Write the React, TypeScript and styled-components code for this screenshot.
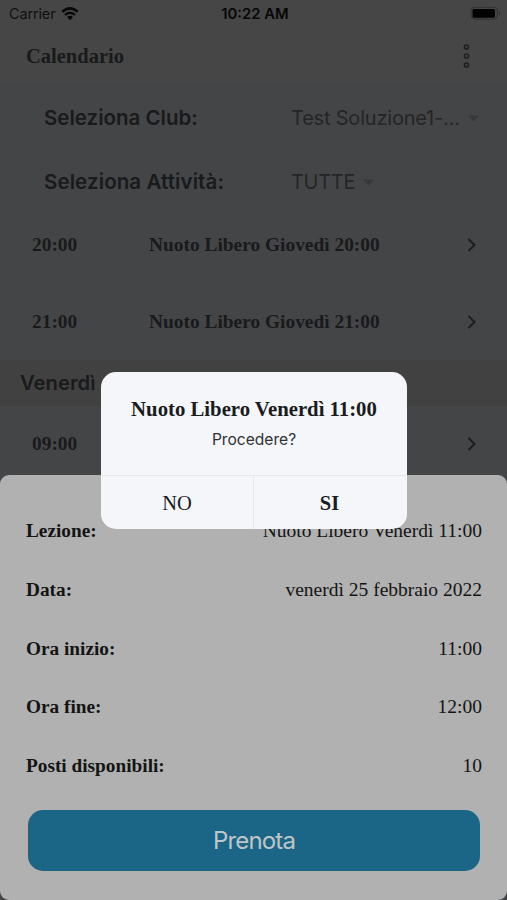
import React from "react";
import styled, { createGlobalStyle } from "styled-components";

const GlobalStyle = createGlobalStyle`
  * { box-sizing: border-box; }
  body { margin: 0; background: #464646; }
`;

const serif = '"Liberation Serif", "Times New Roman", serif';
const sans = 'Inter, "Liberation Sans", sans-serif';

const Phone = styled.main`
  position: relative;
  width: 507px;
  height: 900px;
  overflow: hidden;
  background: #444547;
  color: #191a1b;
  font-family: ${serif};
  white-space: nowrap;
`;

const StatusBar = styled.div`
  display: grid;
  grid-template-columns: 1fr auto 1fr;
  align-items: center;
  height: 28px;
  padding: 0 6px 0 9px;
  background: #464646;
  color: #070707;
  font: 400 14.5px/28px ${sans};
`;

const Carrier = styled.div`
  display: flex;
  align-items: center;
  gap: 6px;
  color: #111;
  letter-spacing: -0.15px;
`;

const Clock = styled.div`
  font-weight: 600;
  font-size: 14.8px;
`;

const Battery = styled.svg`
  justify-self: end;
`;

const Header = styled.header`
  display: flex;
  align-items: center;
  justify-content: space-between;
  height: 56px;
  padding: 0 36px 0 26px;
  background: #464646;
`;

const Title = styled.h1`
  margin: 0;
  font: 700 20.5px/24px ${serif};
`;

const Filters = styled.section`
  display: flex;
  flex-direction: column;
  height: 123px;
  padding-top: 2px;
`;

const FilterRow = styled.div`
  display: flex;
  flex: none;
  align-items: center;
  height: 64px;
  padding-left: 44px;
  font: 400 20px/28px ${sans};
`;

const FilterLabel = styled.span<{ $spacing?: number }>`
  width: 247px;
  font-weight: 600;
  font-size: 20.5px;
  letter-spacing: ${(p) => p.$spacing ?? 0}px;
`;

const FilterValue = styled.span<{ $spacing: number }>`
  display: flex;
  align-items: center;
  gap: 8px;
  color: #242526;
  letter-spacing: ${(p) => p.$spacing}px;
`;

const LessonRow = styled.div`
  display: grid;
  grid-template-columns: 117px 1fr auto;
  align-items: center;
  height: 76.4px;
  padding: 0 30px 0 32px;
  font: 700 19.4px/24px ${serif};
`;

const DayHeader = styled.h2`
  margin: 0;
  height: 46px;
  padding-left: 20px;
  background: #424141;
  font: 600 20.3px/46px ${sans};
  word-spacing: 2px;
`;

const Sheet = styled.section`
  position: absolute;
  left: 0;
  right: 0;
  top: 475px;
  height: 425px;
  padding: 27.2px 25px 0 26px;
  border-radius: 9px;
  background: #b1b1b1;
  color: #141414;
`;

const DetailRow = styled.div`
  display: flex;
  align-items: center;
  justify-content: space-between;
  height: 58.6px;
  font-size: 19.5px;
`;

const DetailLabel = styled.b`
  font-size: 19.3px;
`;

const Book = styled.button`
  display: block;
  width: 452px;
  height: 61px;
  margin: 14.8px 0 0 2px;
  border: 0;
  border-radius: 15px;
  background: #1b6687;
  color: #c0c5c7;
  font: 400 24px/61px ${sans};
  letter-spacing: -0.85px;
  padding: 0;
`;

const Dialog = styled.div`
  position: absolute;
  left: 101px;
  top: 372px;
  width: 306px;
  height: 157px;
  border-radius: 15px;
  background: #f4f6fa;
  color: #1b1c1e;
  text-align: center;
  overflow: hidden;
`;

const DialogBody = styled.div`
  height: 103px;
  padding-top: 25px;
`;

const DialogTitle = styled.div`
  font: 700 20.75px/25px ${serif};
`;

const DialogText = styled.div`
  margin-top: 7px;
  color: #303134;
  font: 400 15.6px/22px ${sans};
`;

const Actions = styled.div`
  display: grid;
  grid-template-columns: 152px 1fr;
  height: 54px;
  border-top: 1px solid #e7e9ed;
`;

const Action = styled.button<{ $primary?: boolean }>`
  border: 0;
  border-left: ${(p) => (p.$primary ? "1px solid #e7e9ed" : "0")};
  background: transparent;
  color: #1b1c1e;
  font: ${(p) => (p.$primary ? 700 : 400)} 20.5px/24px ${serif};
  padding: ${(p) => (p.$primary ? "1px 2px 0 0" : "1px 0 0")};
`;

const Wifi = () => (
  <svg width="18" height="14" viewBox="0 0 19 15" fill="none" stroke="#080808">
    <path d="M1.2 5.2Q9.5-2.1 17.8 5.2" strokeWidth="2.8" />
    <path d="M4.1 8.5Q9.5 3.8 14.9 8.5" strokeWidth="2.5" />
    <path d="M9.5 14.2 6.4 10.8Q9.5 8.2 12.6 10.8Z" fill="#080808" stroke="none" />
  </svg>
);

const Dots = () => (
  <svg width="10" height="26" viewBox="0 0 10 26" fill="none" stroke="#202020" strokeWidth="1.7">
    <circle cx="5.5" cy="4" r="2" />
    <circle cx="5.5" cy="13" r="2" />
    <circle cx="5.5" cy="22" r="2" />
  </svg>
);

const Caret = () => (
  <svg width="11" height="7" viewBox="0 0 11 7">
    <path d="M0 .5h11L5.5 6.5z" fill="#37383a" />
  </svg>
);

const Chevron = () => (
  <svg width="10" height="16" viewBox="0 0 10 16" fill="none" stroke="#1c1d1e" strokeWidth="2">
    <path d="m1.5 2 6 6-6 6" />
  </svg>
);

const Lesson = ({ time, name }: { time: string; name: string }) => (
  <LessonRow>
    <span>{time}</span>
    <span>{name}</span>
    <Chevron />
  </LessonRow>
);

const details = [
  ["Lezione:", "Nuoto Libero Venerdì 11:00"],
  ["Data:", "venerdì 25 febbraio 2022"],
  ["Ora inizio:", "11:00"],
  ["Ora fine:", "12:00"],
  ["Posti disponibili:", "10"],
];

export default function App() {
  return (
    <Phone>
      <GlobalStyle />
      <StatusBar>
        <Carrier>
          Carrier <Wifi />
        </Carrier>
        <Clock>10:22 AM</Clock>
        <Battery width="31" height="14" viewBox="0 0 31 14">
          <rect x="1" y=".2" width="26.5" height="12" rx="4" fill="none" stroke="#303030" />
          <rect x="2.5" y="1.9" width="22.5" height="8.8" rx="1.5" fill="#020202" />
          <path d="M29 4q2 2.2 0 4.4z" fill="#303030" />
        </Battery>
      </StatusBar>
      <Header>
        <Title>Calendario</Title>
        <Dots />
      </Header>
      <Filters>
        <FilterRow>
          <FilterLabel>Seleziona Club:</FilterLabel>
          <FilterValue $spacing={-0.2}>
            Test Soluzione1-... <Caret />
          </FilterValue>
        </FilterRow>
        <FilterRow>
          <FilterLabel $spacing={0.1}>Seleziona Attività:</FilterLabel>
          <FilterValue $spacing={-0.3}>
            TUTTE <Caret />
          </FilterValue>
        </FilterRow>
      </Filters>
      <Lesson time="20:00" name="Nuoto Libero Giovedì 20:00" />
      <Lesson time="21:00" name="Nuoto Libero Giovedì 21:00" />
      <DayHeader>Venerdì 25</DayHeader>
      <Lesson time="09:00" name="" />
      <Sheet>
        {details.map(([label, value]) => (
          <DetailRow key={label}>
            <DetailLabel>{label}</DetailLabel>
            <span>{value}</span>
          </DetailRow>
        ))}
        <Book>Prenota</Book>
      </Sheet>
      <Dialog role="dialog">
        <DialogBody>
          <DialogTitle>Nuoto Libero Venerdì 11:00</DialogTitle>
          <DialogText>Procedere?</DialogText>
        </DialogBody>
        <Actions>
          <Action>NO</Action>
          <Action $primary>SI</Action>
        </Actions>
      </Dialog>
    </Phone>
  );
}
